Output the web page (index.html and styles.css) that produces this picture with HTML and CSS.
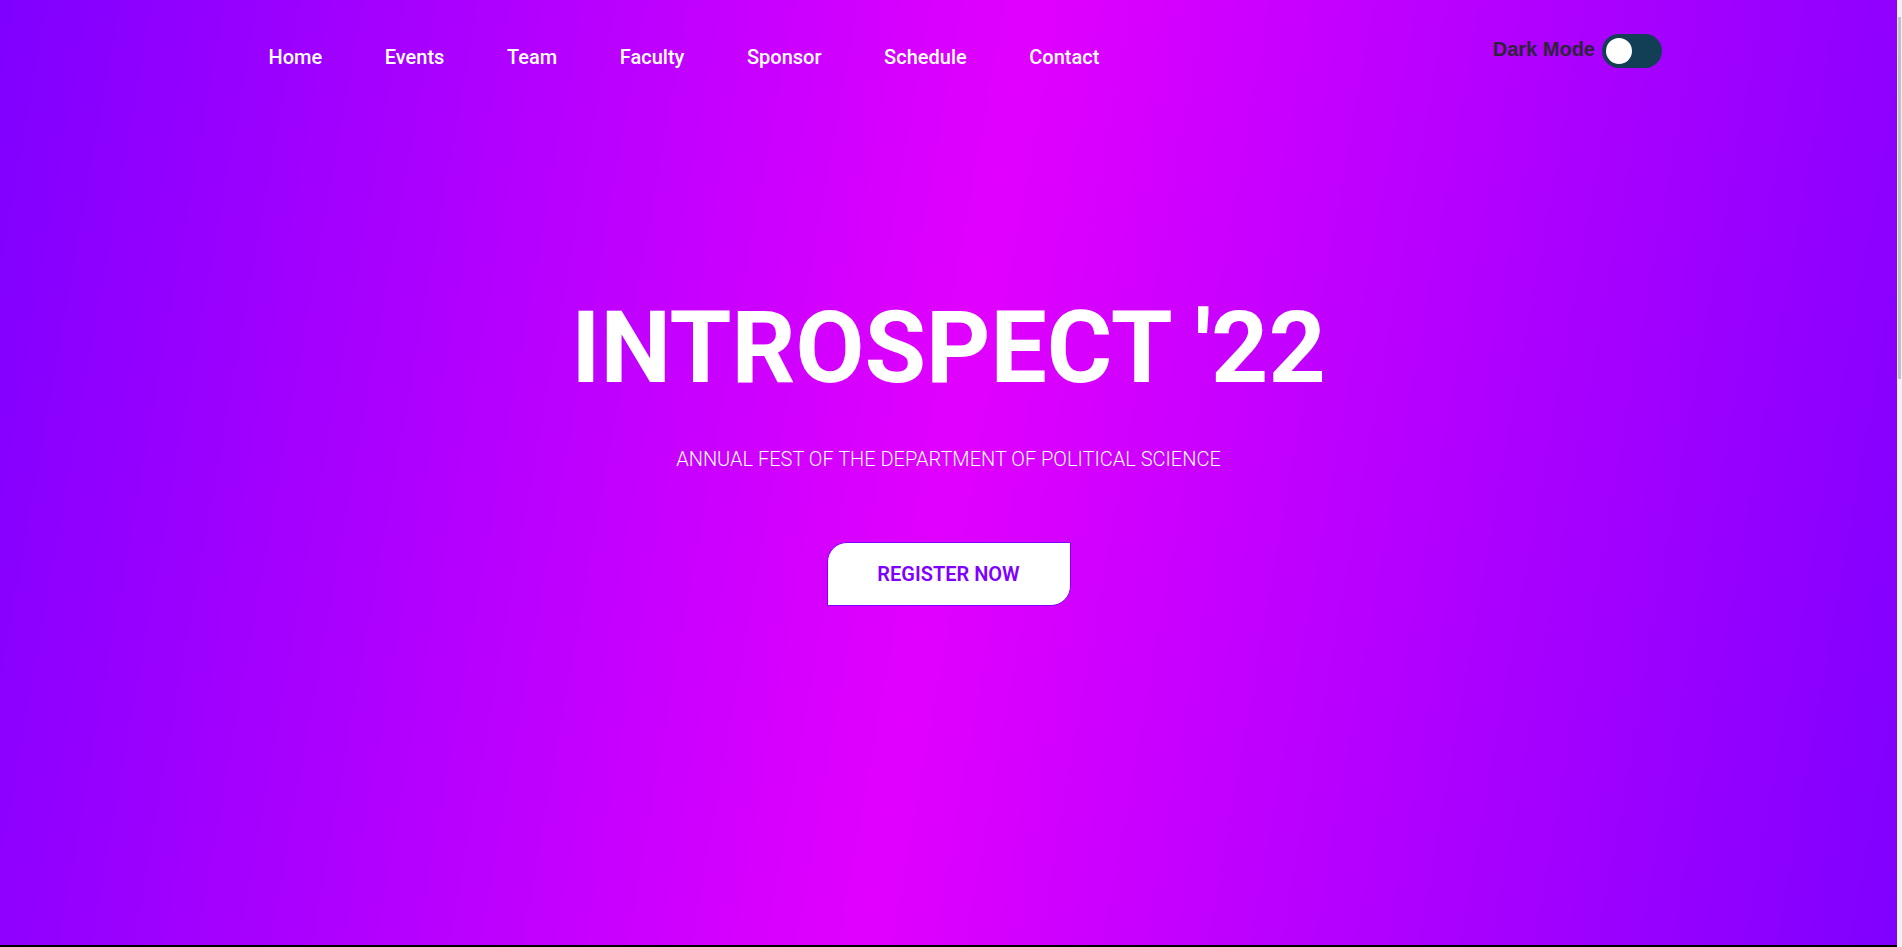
FILE: index.html
```html
<!DOCTYPE html>
<html lang="en">
<head>
<meta charset="utf-8">
<title>Introspect '22</title>
<link rel="stylesheet" href="styles.css">
</head>
<body>
<section class="hero">
  <header class="header">
    <ul class="nav">
      <li><a href="#">Home</a></li>
      <li><a href="#">Events</a></li>
      <li><a href="#">Team</a></li>
      <li><a href="#">Faculty</a></li>
      <li><a href="#">Sponsor</a></li>
      <li><a href="#">Schedule</a></li>
      <li><a href="#">Contact</a></li>
    </ul>
    <div class="mode">
      <span class="mode-label">Dark Mode</span>
      <label class="switch"><span class="knob"></span></label>
    </div>
  </header>
  <div class="intro">
    <h1 class="title">INTROSPECT '22</h1>
    <p class="subtitle">ANNUAL FEST OF THE DEPARTMENT OF POLITICAL SCIENCE</p>
    <a class="register" href="#">REGISTER NOW</a>
  </div>
</section>
<section class="below"></section>
<div class="scrollbar"><div class="thumb"></div></div>
</body>
</html>
```
FILE: styles.css
```css
html, body {
  margin: 0;
  padding: 0;
}
html {
  scrollbar-width: none;
}
::-webkit-scrollbar {
  width: 0;
  height: 0;
}
body {
  font-family: Roboto, "Liberation Sans", sans-serif;
  background: #000;
  padding-right: 5px;
}
.scrollbar {
  position: fixed;
  top: 0;
  right: 0;
  width: 5px;
  height: 100vh;
  box-sizing: border-box;
  padding: 17px 1px 0 1px;
  background: #f1f1f1;
}
.thumb {
  height: 362px;
  background: #c1c1c1;
}
.hero {
  height: 945px;
  background: linear-gradient(100deg, #7f00ff 0%, #e100ff 50%, #7f00ff 100%);
  display: flex;
  flex-direction: column;
}
.header {
  display: flex;
  align-items: flex-start;
  padding: 0 235px 0 268.5px;
  height: 69px;
}
.nav {
  display: flex;
  list-style: none;
  margin: 0;
  padding: 45px 0 0 0;
  gap: 62.6px;
}
.nav a {
  color: #fff;
  text-decoration: none;
  font-size: 20px;
  font-weight: 500;
  line-height: 24px;
}
.mode {
  margin-left: auto;
  margin-top: 34px;
  display: flex;
  align-items: flex-start;
  gap: 7px;
}
.mode-label {
  font-family: "Liberation Sans", Arial, sans-serif;
  font-weight: 700;
  font-size: 20px;
  line-height: 22px;
  margin-top: 4px;
  color: #2e2438;
}
.switch {
  width: 60px;
  height: 34px;
  border-radius: 34px;
  background: #123f55;
  display: flex;
  align-items: center;
  padding: 0 4px;
  box-sizing: border-box;
}
.knob {
  width: 26px;
  height: 26px;
  border-radius: 50%;
  background: #fff;
}
.intro {
  display: flex;
  flex-direction: column;
  align-items: center;
  margin-top: 229px;
}
.title {
  margin: 0;
  color: #fff;
  font-size: 100px;
  font-weight: 700;
  line-height: 100px;
}
.subtitle {
  margin: 49px 0 0 0;
  color: #fff;
  font-size: 20px;
  font-weight: 300;
  line-height: 24px;
}
.register {
  margin-top: 71px;
  width: 244px;
  height: 64px;
  box-sizing: border-box;
  display: flex;
  align-items: center;
  justify-content: center;
  background: #fff;
  border: 1px solid #7f00ff;
  border-radius: 20px 0;
  color: #8000ff;
  font-size: 20px;
  font-weight: 600;
  text-decoration: none;
}
.below {
  height: 1445px;
  background: #000;
}
```
